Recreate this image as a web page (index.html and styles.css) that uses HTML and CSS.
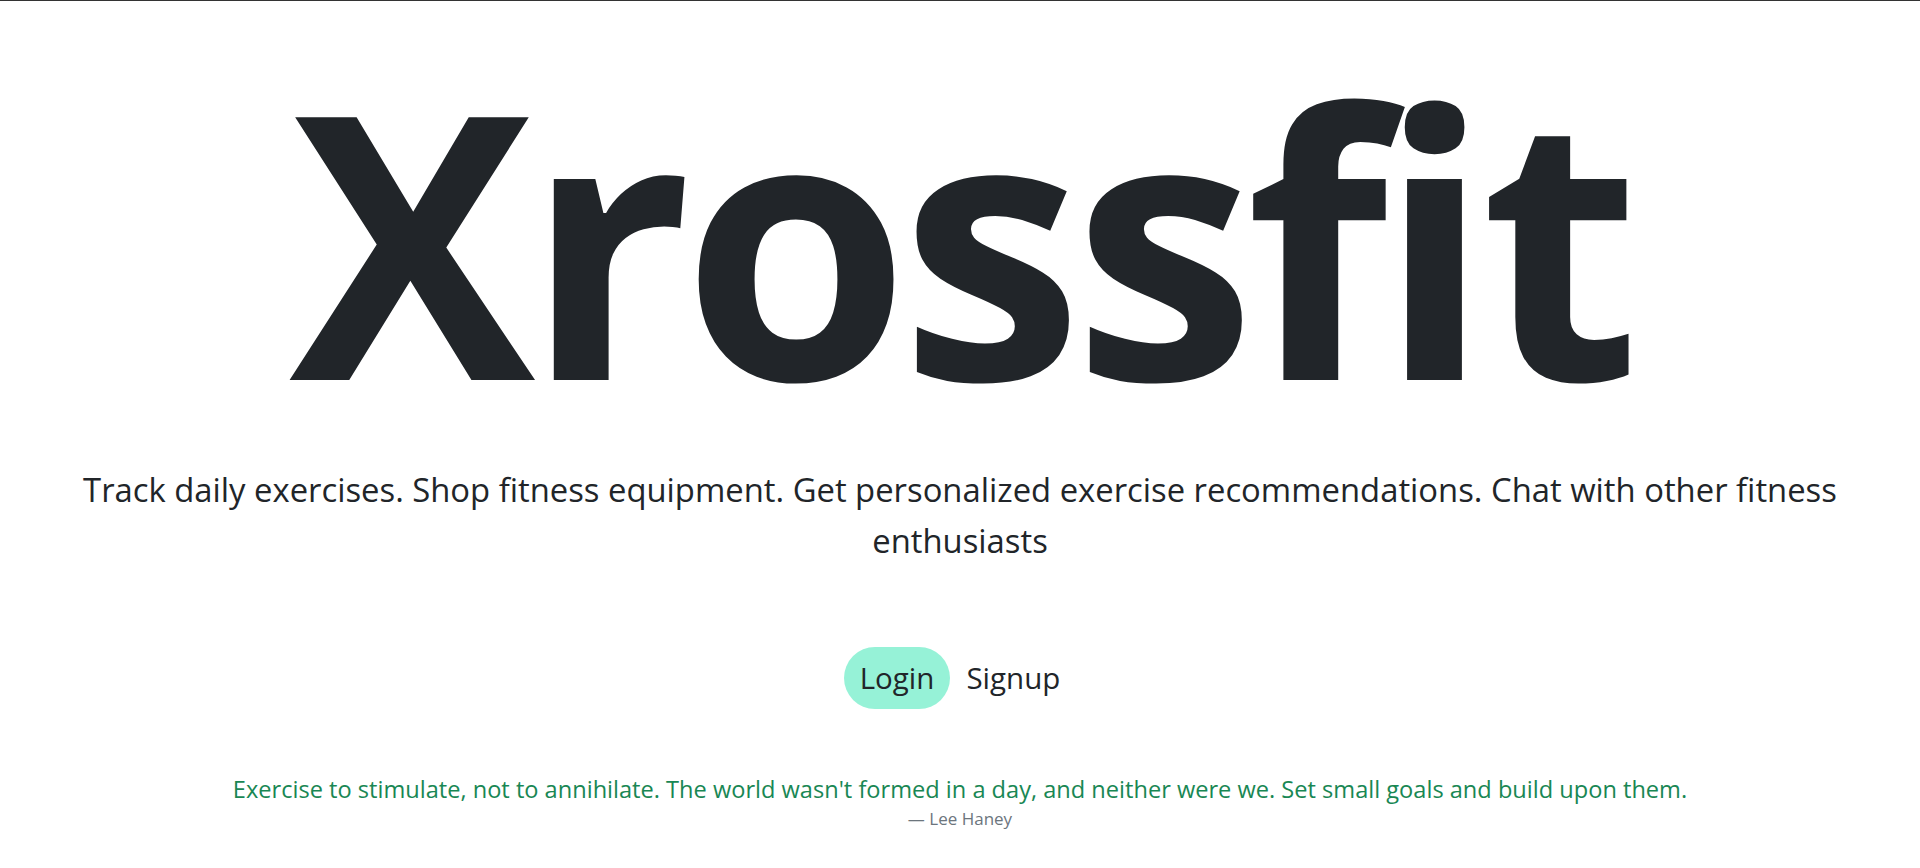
FILE: index.html
```html
<!DOCTYPE html>
<html lang="en">
<head>
<meta charset="utf-8">
<title>Xrossfit</title>
<link rel="stylesheet" href="styles.css">
</head>
<body>
<main class="hero">
  <h1 class="brand">Xrossfit</h1>
  <p class="lead">Track daily exercises. Shop fitness equipment. Get personalized exercise recommendations. Chat with other fitness enthusiasts</p>
  <nav class="actions">
    <a class="btn btn-active" href="#">Login</a>
    <a class="btn" href="#">Signup</a>
  </nav>
  <figure class="quote">
    <blockquote class="quote-text">Exercise to stimulate, not to annihilate. The world wasn't formed in a day, and neither were we. Set small goals and build upon them.</blockquote>
    <figcaption class="quote-author">— Lee Haney</figcaption>
  </figure>
</main>
</body>
</html>
```
FILE: styles.css
```css
* { box-sizing: border-box; }
html, body { margin: 0; padding: 0; }
body {
  background: #fff;
  color: #212529;
  font-family: "Open Sans", "Noto Sans", sans-serif;
  border-top: 1px solid #333;
  min-height: 868px;
}
.hero {
  display: flex;
  flex-direction: column;
  align-items: center;
  text-align: center;
  padding: 0 40px;
}
.brand {
  margin: 16px 0 0;
  font-size: 368px;
  line-height: 1.2;
  font-weight: 700;
  letter-spacing: -10px;
  color: #212529;
}
.lead {
  margin: 5px 0 0;
  font-size: 32.8px;
  line-height: 51.6px;
  max-width: 1820px;
}
.actions {
  display: flex;
  align-items: center;
  gap: 0;
  margin-top: 80px;
}
.btn {
  display: inline-block;
  padding: 12px 16px;
  font-size: 29.5px;
  line-height: 38px;
  color: #212529;
  text-decoration: none;
  border-radius: 31px;
}
.btn-active { background: #96f2d7; }
.quote { margin: 63px 0 0; }
.quote-text {
  margin: 0;
  font-size: 23.6px;
  line-height: 34px;
  color: #198754;
}
.quote-author {
  margin-top: 1px;
  font-size: 17px;
  line-height: 24px;
  color: #6c757d;
}
```
